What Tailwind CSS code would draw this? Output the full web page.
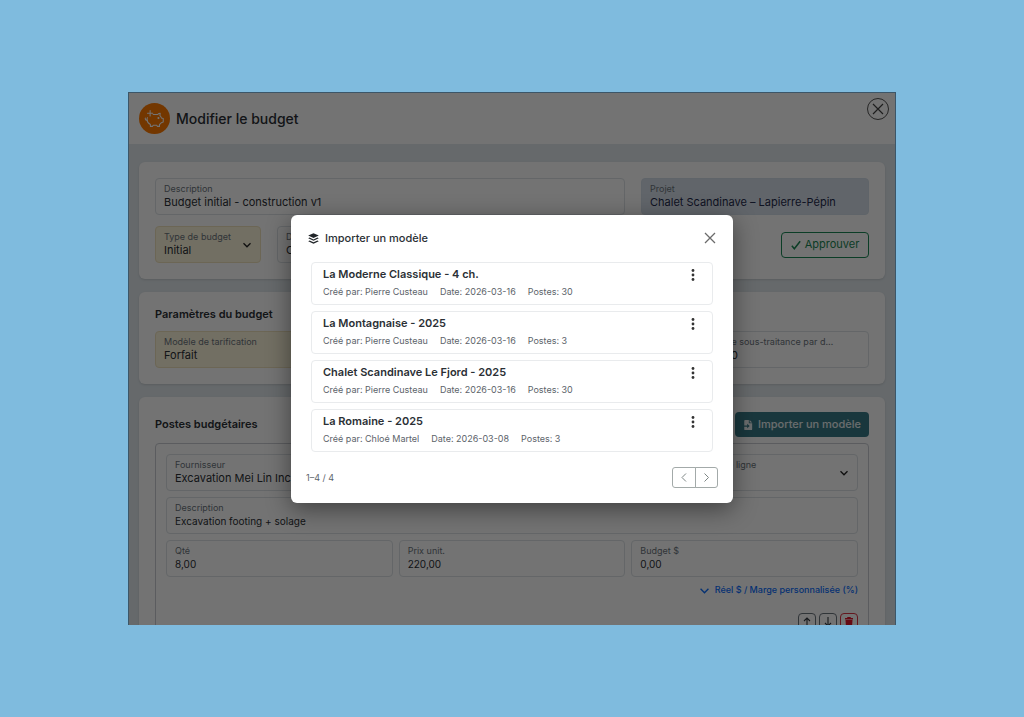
<!DOCTYPE html>
<html lang="fr">
<head>
  <meta charset="UTF-8" />
  <meta name="viewport" content="width=device-width, initial-scale=1" />
  <title>Modifier le budget</title>
  <script src="https://cdn.jsdelivr.net/npm/@tailwindcss/browser@4"></script>
</head>
<body class="bg-[#7fbbde] font-['Inter',sans-serif] text-[#2b3035]">

  <div class="h-screen px-32 py-[92px]">
    <div class="relative h-full overflow-hidden border-x border-t border-[#3c5668] bg-[#e2e9ee] flex flex-col">

      <header class="flex h-[51px] shrink-0 items-center justify-between bg-white pl-[10px] pr-[6px]">
        <div class="flex items-center gap-[6px]">
          <span class="flex size-[31px] items-center justify-center rounded-full bg-[#ff7a00]">
            <svg class="size-[21px]" viewBox="0 0 24 24" fill="none" stroke="#fff" stroke-width="1.2" stroke-linecap="round" stroke-linejoin="round">
              <path d="M10.500 7.500h5c1-1 2-1.500 3-1.500l-.3 2.800c.9.800 1.500 1.700 1.800 2.700l2 .5v4l-2.300.8c-.6 1-1.200 1.500-2 2V21h-2.500l-.7-1.300h-4L9.800 21H7.300v-2.200C5 17.500 3.500 15.500 3.500 13c0-.8.1-1.400.4-2" />
              <path d="M3.500 14C2 14 1.200 12.800 1.500 11.500M7 3v6M4 6h6" />
              <circle cx="16.500" cy="11.500" r=".6" fill="#fff" />
            </svg>
          </span>
          <h1 class="text-[14px] font-medium">Modifier le budget</h1>
        </div>
        <button aria-label="Fermer le budget" class="mb-5 flex size-[22px] items-center justify-center rounded-full border border-[#555]">
          <svg class="size-[12px]" viewBox="0 0 12 12" stroke="#444" stroke-width="1.2"><path d="M1 1l10 10M11 1L1 11" /></svg>
        </button>
      </header>

      <main class="flex flex-col gap-[13px] px-[10px] pt-[18px]">

        <section class="rounded-md bg-white p-4 shadow-sm">
          <div class="flex gap-4">
            <div class="flex-1 rounded border border-[#dee2e6] px-2 pt-1 pb-[5px]">
              <label for="description" class="block text-[9px] leading-[12px] text-[#6c757d]">Description</label>
              <input id="description" value="Budget initial - construction v1" class="block h-[14px] w-full text-[11px]" />
            </div>
            <div class="w-[228px] rounded border border-[#d3dde8] bg-[#d8e1ea] px-2 pt-1 pb-[5px]">
              <label for="projet" class="block text-[9px] leading-[12px] text-[#6c757d]">Projet</label>
              <input id="projet" value="Chalet Scandinave – Lapierre-Pépin" readonly class="block h-[14px] w-full text-[11px] text-[#1f2a4d]" />
            </div>
          </div>
          <div class="mt-[11px] flex items-center gap-4">
            <div class="relative w-[106px] rounded border border-[#f0e3bd] bg-[#fdf5dc] px-2 pt-1 pb-[5px]">
              <label for="type" class="block text-[9px] leading-[12px] text-[#6c757d]">Type de budget</label>
              <select id="type" class="block h-[14px] w-full appearance-none text-[11px] leading-[14px]"><option>Initial</option></select>
              <svg class="pointer-events-none absolute top-[14px] right-[9px] size-[8px]" viewBox="0 0 8 8" fill="none" stroke="#222" stroke-width="1.3"><path d="M.5 2.300L4 5.800l3.500-3.500" /></svg>
            </div>
            <div class="w-[160px] rounded border border-[#dee2e6] px-2 pt-1 pb-[5px]">
              <label for="devise" class="block text-[9px] leading-[12px] text-[#6c757d]">Devise</label>
              <input id="devise" value="CAD" class="block h-[14px] w-full text-[11px]" />
            </div>
            <button class="ml-auto flex h-[26px] w-[88px] items-center justify-center gap-[4px] rounded border border-[#198754] text-[11px] text-[#198754]">
              <svg class="size-[10px]" viewBox="0 0 12 12" fill="none" stroke="currentColor" stroke-width="1.800"><path d="M1 7l3 3.500L11 1.500" /></svg>
              Approuver
            </button>
          </div>
        </section>

        <section class="rounded-md bg-white px-4 pt-[14px] pb-4 shadow-sm">
          <h2 class="mb-[9px] text-[11px] leading-4 font-semibold">Paramètres du budget</h2>
          <div class="grid grid-cols-4 gap-5">
            <div class="col-span-2 rounded border border-[#f0e3bd] bg-[#fdf5dc] px-2 pt-1 pb-[5px]">
              <label for="tarification" class="block text-[9px] leading-[12px] text-[#6c757d]">Modèle de tarification</label>
              <select id="tarification" class="block h-[14px] w-full appearance-none text-[11px] leading-[14px]"><option>Forfait</option></select>
            </div>
            <div class="col-start-4 rounded border border-[#dee2e6] pr-8 pl-2 pt-1 pb-[5px]">
              <label for="soustraitance" class="block truncate text-[9px] leading-[12px] text-[#6c757d]">% de sous-traitance par défaut</label>
              <input id="soustraitance" value="0,00" class="block h-[14px] w-full text-[11px]" />
            </div>
          </div>
        </section>

        <section class="rounded-md bg-white px-4 pt-[15px] shadow-sm">
          <div class="mb-[6px] flex items-center justify-between">
            <h2 class="text-[11px] font-semibold">Postes budgétaires</h2>
            <button class="flex h-[25px] items-center gap-[5px] rounded bg-[#397a87] px-2 text-[11px] font-medium text-white/90">
              <svg class="size-[10px]" viewBox="0 0 12 12" fill="currentColor"><path fill-rule="evenodd" d="M2.500 0H7v4h4v7a1 1 0 0 1-1 1H2.500a1 1 0 0 1-1-1V8H5v2l3-2.700-3-2.700v2H1.500V1a1 1 0 0 1 1-1zM8 0l3 3H8z" /></svg>
              Importer un modèle
            </button>
          </div>
          <div class="flex flex-col gap-[6px] rounded border border-[#c9cdd2] p-[10px]">
            <div class="flex gap-[6px]">
              <div class="flex-1 rounded border border-[#dee2e6] px-2 pt-1 pb-[5px]">
                <label for="fournisseur" class="block text-[9px] leading-[12px] text-[#6c757d]">Fournisseur</label>
                <input id="fournisseur" value="Excavation Mei Lin Inc." class="block h-[14px] w-full text-[11px]" />
              </div>
              <div class="relative w-[168px] rounded border border-[#dee2e6] px-2 pt-1 pb-[5px]">
                <label for="ligne" class="block text-[9px] leading-[12px] text-[#6c757d]">Type de ligne</label>
                <select id="ligne" class="block h-[14px] w-full appearance-none text-[11px] leading-[14px]"><option>Coût</option></select>
                <svg class="pointer-events-none absolute top-[14px] right-[9px] size-[8px]" viewBox="0 0 8 8" fill="none" stroke="#222" stroke-width="1.3"><path d="M.5 2.300L4 5.800l3.500-3.500" /></svg>
              </div>
            </div>
            <div class="rounded border border-[#dee2e6] px-2 pt-1 pb-[5px]">
              <label for="poste" class="block text-[9px] leading-[12px] text-[#6c757d]">Description</label>
              <input id="poste" value="Excavation footing + solage" class="block h-[14px] w-full text-[10px]" />
            </div>
            <div class="grid grid-cols-3 gap-[6px]">
              <div class="rounded border border-[#dee2e6] px-2 pt-1 pb-[5px]">
                <label for="qte" class="block text-[9px] leading-[12px] text-[#6c757d]">Qté</label>
                <input id="qte" value="8,00" class="block h-[14px] w-full text-[10px]" />
              </div>
              <div class="rounded border border-[#dee2e6] px-2 pt-1 pb-[5px]">
                <label for="prix" class="block text-[9px] leading-[12px] text-[#6c757d]">Prix unit.</label>
                <input id="prix" value="220,00" class="block h-[14px] w-full text-[10px]" />
              </div>
              <div class="rounded border border-[#dee2e6] px-2 pt-1 pb-[5px]">
                <label for="budget" class="block text-[9px] leading-[12px] text-[#6c757d]">Budget $</label>
                <input id="budget" value="0,00" class="block h-[14px] w-full text-[10px]" />
              </div>
            </div>
            <button class="flex items-center gap-[6px] self-end text-[9px] leading-[14px] font-medium text-[#0d6efd]">
              <svg class="size-[9px]" viewBox="0 0 8 8" fill="none" stroke="currentColor" stroke-width="1.2"><path d="M.5 2.500L4 6l3.500-3.500" /></svg>
              Réel $ / Marge personnalisée (%)
            </button>
            <div class="mt-[10px] flex justify-end gap-[3px]">
              <button aria-label="Monter" class="flex size-[18px] items-center justify-center rounded-sm border border-[#6c757d]">
                <svg class="size-[10px]" viewBox="0 0 10 10" fill="none" stroke="#343a40" stroke-width="1.1"><path d="M5 10V1M2 4l3-3 3 3" /></svg>
              </button>
              <button aria-label="Descendre" class="flex size-[18px] items-center justify-center rounded-sm border border-[#6c757d]">
                <svg class="size-[10px]" viewBox="0 0 10 10" fill="none" stroke="#343a40" stroke-width="1.1"><path d="M5 0v9M2 6l3 3 3-3" /></svg>
              </button>
              <button aria-label="Supprimer" class="flex size-[18px] items-center justify-center rounded-sm border border-[#dc3545]">
                <svg class="size-[10px]" viewBox="0 0 10 10" fill="#e0142a"><path d="M3.500 0h3l.5 1h2v1.500H1V1h2zM1.500 3h7L8 10H2z" /></svg>
              </button>
            </div>
          </div>
        </section>
      </main>

      <!-- Fenêtre modale -->
      <div class="absolute inset-0 flex items-center justify-center bg-black/55">
        <div role="dialog" aria-labelledby="titre-modal" class="w-[442px] rounded-md bg-white px-[15px] pt-[14px] pb-[15px] shadow-[0_6px_24px_rgba(0,0,0,0.45)]">
          <div class="flex h-[18px] items-center justify-between px-[2px]">
            <div class="flex items-center gap-[6px]">
              <svg class="size-[11px]" viewBox="0 0 16 16" fill="#212529">
                <path d="M8 .2l7.700 3.600L8 7.400.3 3.800z" />
                <path d="M2.300 6.700L.3 7.700 8 11.300l7.700-3.600-2-1L8 9.400z" />
                <path d="M2.300 10.900L.3 11.900 8 15.500l7.700-3.600-2-1L8 13.600z" />
              </svg>
              <h2 id="titre-modal" class="text-[11px] font-medium">Importer un modèle</h2>
            </div>
            <button aria-label="Fermer" class="flex size-[12px] items-center justify-center">
              <svg class="size-[12px]" viewBox="0 0 12 12" stroke="#6b6b6b" stroke-width="1.3"><path d="M1 1l10 10M11 1L1 11" /></svg>
            </button>
          </div>

          <ul id="modeles" class="mt-[15px] flex flex-col gap-[6px] px-[5px]"></ul>

          <div class="mt-[15px] flex items-center justify-between">
            <span class="text-[9px] text-[#5c636a]">1–4 / 4</span>
            <div class="flex">
              <button aria-label="Page précédente" class="flex h-[21px] w-[24px] items-center justify-center rounded-l-[3px] border border-[#a3aaa9]">
                <svg class="size-[9px]" viewBox="0 0 9 9" fill="none" stroke="#7d8584"><path d="M6 .5l-4 4 4 4" /></svg>
              </button>
              <button aria-label="Page suivante" class="-ml-px flex h-[21px] w-[23px] items-center justify-center rounded-r-[3px] border border-[#a3aaa9]">
                <svg class="size-[9px]" viewBox="0 0 9 9" fill="none" stroke="#7d8584"><path d="M2.500.5l4 4-4 4" /></svg>
              </button>
            </div>
          </div>
        </div>
      </div>
    </div>
  </div>

  <script>
  const modeles = [
    { titre: "La Moderne Classique - 4 ch.", auteur: "Pierre Custeau", date: "2026-03-16", postes: 30 },
    { titre: "La Montagnaise - 2025", auteur: "Pierre Custeau", date: "2026-03-16", postes: 3 },
    { titre: "Chalet Scandinave Le Fjord - 2025", auteur: "Pierre Custeau", date: "2026-03-16", postes: 30 },
    { titre: "La Romaine - 2025", auteur: "Chloé Martel", date: "2026-03-08", postes: 3 }
  ];

  document.getElementById("modeles").innerHTML = modeles.map(m => `
    <li class="flex h-[43px] items-start justify-between rounded border border-[#e9ebed] pt-[3px] pr-[15px] pl-[11px]">
      <div>
        <h3 class="text-[11px] leading-[17px] font-semibold">${m.titre}</h3>
        <p class="flex gap-3 text-[9px] leading-[17px] text-[#5c636a]">
          <span>Créé par: ${m.auteur}</span><span>Date: ${m.date}</span><span>Postes: ${m.postes}</span>
        </p>
      </div>
      <button aria-label="Options" class="mt-[3px]">
        <svg class="h-[12px] w-[8px]" viewBox="0 0 8 12" fill="#333"><circle cx="4" cy="1.500" r="1.400" /><circle cx="4" cy="6" r="1.400" /><circle cx="4" cy="10.500" r="1.400" /></svg>
      </button>
    </li>`).join("");
  </script>

</body>
</html>
